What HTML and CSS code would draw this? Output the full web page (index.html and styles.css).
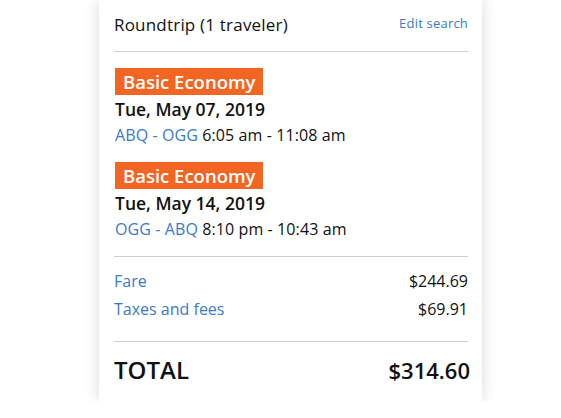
FILE: index.html
```html
<!DOCTYPE html>
<html>
<head>
<meta charset="utf-8">
<link rel="stylesheet" href="styles.css">
</head>
<body>
<div class="card">
  <div class="head">
    <span class="trip">Roundtrip (1 traveler)</span>
    <a class="edit">Edit search</a>
  </div>
  <div class="flights">
    <div class="flight">
      <div class="badge">Basic Economy</div>
      <div class="date">Tue, May 07, 2019</div>
      <div class="route"><span class="air">ABQ - OGG</span> 6:05 am - 11:08 am</div>
    </div>
    <div class="flight">
      <div class="badge">Basic Economy</div>
      <div class="date">Tue, May 14, 2019</div>
      <div class="route"><span class="air">OGG - ABQ</span> 8:10 pm - 10:43 am</div>
    </div>
  </div>
  <div class="costs">
    <div class="row"><span class="lbl">Fare</span><span>$244.69</span></div>
    <div class="row"><span class="lbl">Taxes and fees</span><span>$69.91</span></div>
  </div>
  <div class="total">
    <span class="ttl">TOTAL</span><span class="amt">$314.60</span>
  </div>
</div>
</body>
</html>
```
FILE: styles.css
```css
html, body {
  margin: 0;
  padding: 0;
  background: #fff;
}
body {
  font-family: "Open Sans", "Noto Sans", sans-serif;
  color: #111;
}
.card {
  margin-left: 99px;
  width: 383px;
  box-sizing: border-box;
  padding: 0 14px 0 15px;
  background: #fff;
  box-shadow: 0 0 14px rgba(0,0,0,0.15);
}
.head {
  display: flex;
  justify-content: space-between;
  align-items: flex-start;
  padding-top: 12px;
  padding-bottom: 13px;
  border-bottom: 1px solid #cfcfcf;
}
.trip {
  font-size: 17px;
  letter-spacing: 0.2px;
  line-height: 26px;
}
.edit {
  font-size: 13px;
  letter-spacing: 0.2px;
  color: #3a7bc8;
  line-height: 20px;
  margin-top: 1px;
}
.flights {
  padding: 16px 0 14px;
  border-bottom: 1px solid #cfcfcf;
  display: flex;
  flex-direction: column;
  gap: 14px;
}
.flight {
  display: flex;
  flex-direction: column;
  align-items: flex-start;
}
.badge {
  background: #f26522;
  color: #fff;
  font-size: 18.5px;
  font-weight: 600;
  line-height: 27px;
  padding: 0 8px;
  margin-left: 1px;
}
.date {
  font-size: 17.5px;
  font-weight: 600;
  line-height: 26px;
  margin-top: 1px;
  margin-left: 1px;
}
.route {
  font-size: 16px;
  letter-spacing: 0.1px;
  line-height: 26px;
  margin-left: 1px;
}
.air {
  color: #3a7bc8;
}
.costs {
  padding: 10px 0 18px;
  border-bottom: 1px solid #cfcfcf;
}
.row {
  display: flex;
  justify-content: space-between;
  font-size: 16px;
  line-height: 28px;
}
.lbl {
  color: #3a7bc8;
}
.total {
  display: flex;
  justify-content: space-between;
  align-items: baseline;
  padding: 11px 0 14px;
  font-weight: 600;
  line-height: 34px;
}
.ttl {
  font-size: 24px;
}
.amt {
  font-size: 22px;
  margin-right: -2px;
}
```
